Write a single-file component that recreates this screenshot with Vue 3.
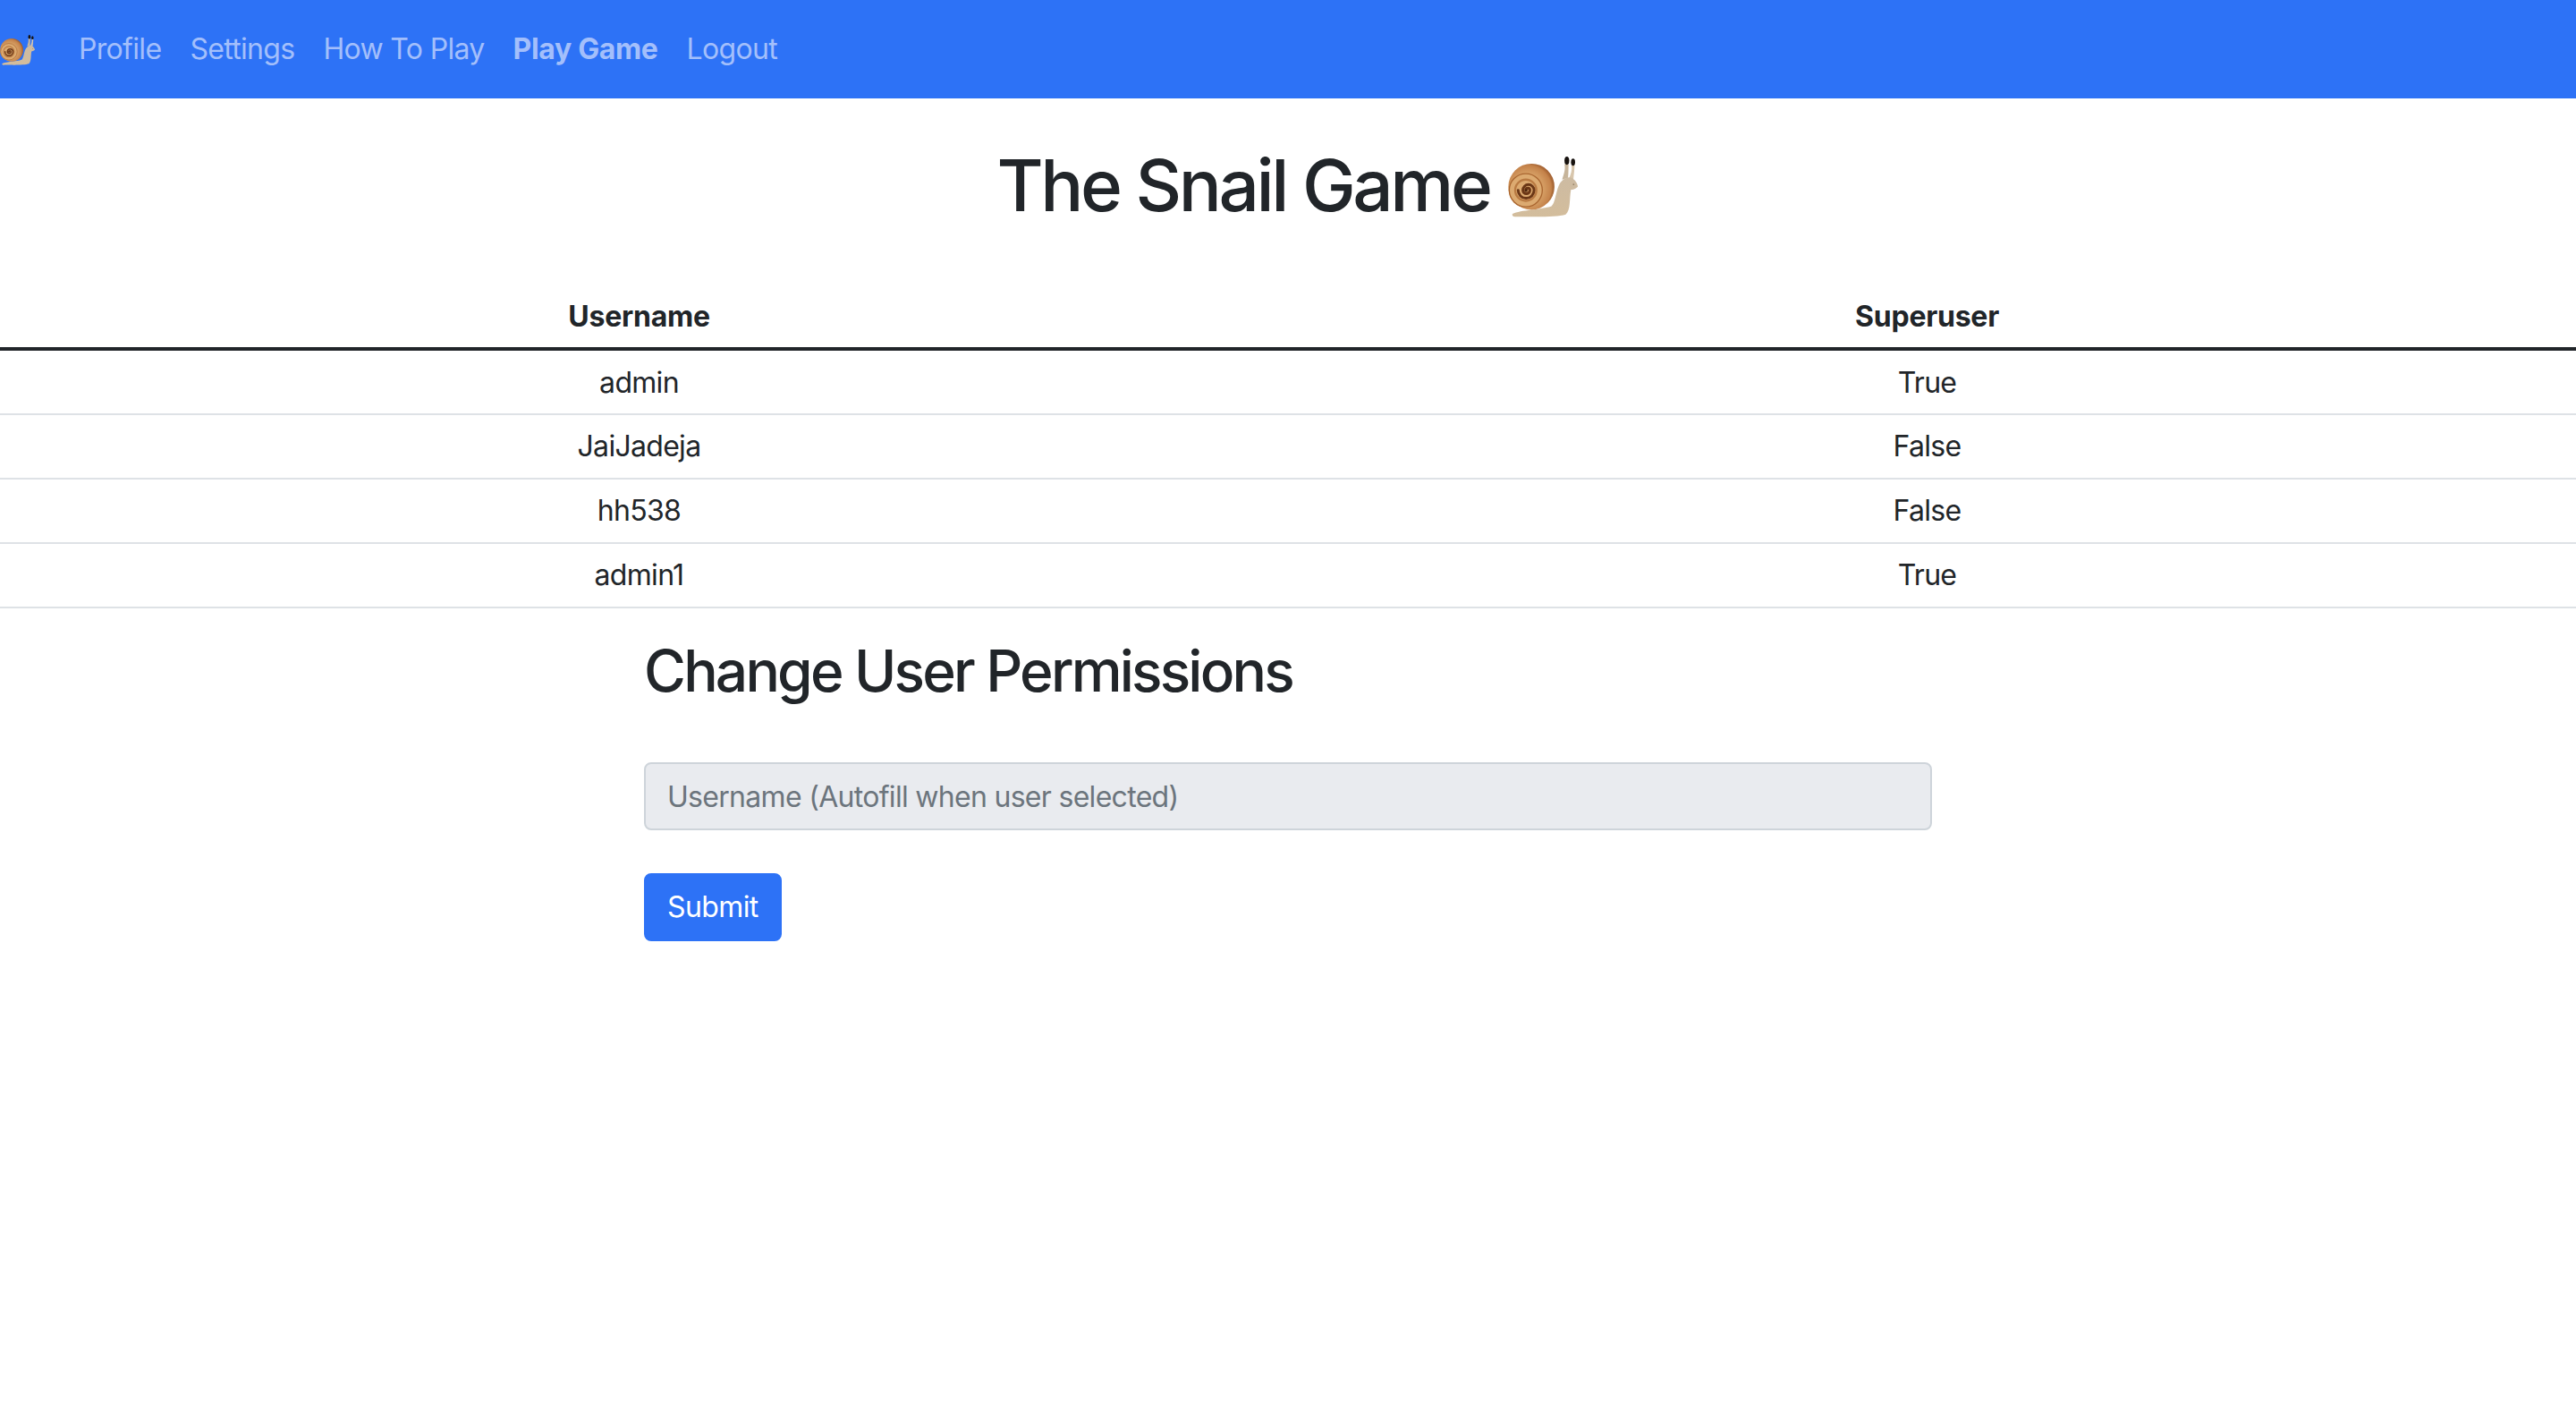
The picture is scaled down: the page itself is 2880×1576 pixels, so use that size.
<template>
  <div class="page">
    <nav class="navbar">
      <a class="brand" href="#">
        <svg class="snail snail-small" viewBox="78 40 240 212">
          <defs>
            <radialGradient id="shell" cx="0.42" cy="0.55" r="0.6">
              <stop offset="0" stop-color="#dca066" />
              <stop offset="0.6" stop-color="#d39a60" />
              <stop offset="0.85" stop-color="#c4824a" />
              <stop offset="1" stop-color="#9a5224" />
            </radialGradient>
            <linearGradient id="body" x1="0" y1="0" x2="0" y2="1">
              <stop offset="0" stop-color="#cdbba2" />
              <stop offset="1" stop-color="#d3bd9c" />
            </linearGradient>
          </defs>
          <g id="snail-art">
            <path d="M268 72 C272 92 266 104 260 124 L280 118 C282 100 281 86 282 72 Z" fill="#c6b49a" />
            <path d="M292 76 C294 92 290 104 284 118 L298 124 C300 104 302 90 302 76 Z" fill="#d8c6ac" />
            <path d="M92 240 C120 226 190 226 224 214 C236 204 238 170 248 146 C256 126 276 112 292 118 C304 124 314 140 313 148 C304 156 296 158 290 158 C284 190 290 226 272 242 C240 254 130 248 100 250 C92 250 90 244 92 240 Z" fill="url(#body)" />
            <path d="M298 136 L302 143 L296 142 Z" fill="#8d7a60" />
            <ellipse cx="276" cy="60" rx="8" ry="14" fill="#17120f" />
            <ellipse cx="297" cy="65" rx="7" ry="12" fill="#17120f" />
            <circle cx="156" cy="148" r="78" fill="url(#shell)" />
            <path d="M156 72 C214 78 244 130 226 178 M172 74 C222 92 240 140 224 184 M190 82 C228 106 238 150 220 192 M207 94 C232 120 236 162 212 200" fill="none" stroke="#a96f3c" stroke-width="3" opacity="0.45" />
            <circle cx="137" cy="160" r="58" fill="#dcaa70" />
            <path d="M81 160 a56 56 0 0 1 112 0 a56 56 0 0 1 -112 0" fill="none" stroke="#a9652f" stroke-width="4" />
            <path d="M101 160 a36 36 0 0 1 72 0 a36 36 0 0 1 -72 0" fill="none" stroke="#b97a42" stroke-width="7" />
            <path d="M137 160 a7 7 0 0 1 14 0 a12 12 0 0 1 -24 0 a19 19 0 0 1 38 0 a27 27 0 0 1 -54 0" fill="none" stroke="#6b3716" stroke-width="9" stroke-linecap="round" />
            <circle cx="138" cy="161" r="5" fill="#4d260e" />
          </g>
        </svg>
      </a>
      <a v-for="link in links" :key="link.label" class="nav-link" :class="{ active: link.active }" href="#">
        {{ link.label }}
      </a>
    </nav>

    <h1 class="title">
      The Snail Game
      <svg class="snail snail-big" viewBox="78 40 240 212"><use href="#snail-art" /></svg>
    </h1>

    <table class="users">
      <thead>
        <tr>
          <th>Username</th>
          <th>Superuser</th>
        </tr>
      </thead>
      <tbody>
        <tr v-for="user in users" :key="user.name">
          <td>{{ user.name }}</td>
          <td>{{ user.superuser }}</td>
        </tr>
      </tbody>
    </table>

    <form class="permissions" @submit.prevent>
      <h2>Change User Permissions</h2>
      <input class="field" type="text" disabled placeholder="Username (Autofill when user selected)" />
      <button class="submit" type="submit">Submit</button>
    </form>
  </div>
</template>

<script setup>
const links = [
  { label: 'Profile' },
  { label: 'Settings' },
  { label: 'How To Play' },
  { label: 'Play Game', active: true },
  { label: 'Logout' },
]

const users = [
  { name: 'admin', superuser: 'True' },
  { name: 'JaiJadeja', superuser: 'False' },
  { name: 'hh538', superuser: 'False' },
  { name: 'admin1', superuser: 'True' },
]
</script>

<style>
body {
  background: #fff;
}
</style>

<style scoped>
.page {
  min-height: 1576px;
  font-family: Inter, "Liberation Sans", sans-serif;
  font-size: 32px;
  line-height: 48px;
  letter-spacing: -0.7px;
  color: #212529;
}

.navbar {
  display: flex;
  align-items: center;
  height: 110px;
  background: #2d72f6;
}

.brand {
  display: flex;
  margin-right: 32px;
}

.snail {
  display: block;
}

.snail-small {
  width: 40px;
  height: 35px;
}

.nav-link {
  padding: 0 16px;
  color: #a3bffb;
  letter-spacing: -0.68px;
  text-decoration: none;
}

.nav-link.active {
  font-weight: 700;
  letter-spacing: -0.35px;
}

.title {
  display: flex;
  justify-content: center;
  align-items: flex-start;
  gap: 20px;
  height: 210px;
  margin: 0;
  padding-top: 49px;
  box-sizing: border-box;
  font-size: 80px;
  font-weight: 500;
  line-height: 96px;
  letter-spacing: -3.4px;
}

.snail-big {
  width: 80px;
  height: 70px;
  margin-top: 14px;
}

.users {
  width: 100%;
  border-collapse: separate;
  border-spacing: 0;
  table-layout: fixed;
  text-align: center;
}

.users th {
  height: 72px;
  padding: 0;
  box-sizing: border-box;
  font-weight: 700;
  letter-spacing: -0.25px;
  border-bottom: 4px solid #212529;
}

.users th:first-child {
  width: 1429px;
}

.users td {
  height: 72px;
  padding: 0;
  box-sizing: border-box;
  border-bottom: 2px solid #dee2e6;
}

.users tr:first-child td {
  padding-top: 2px;
}

.permissions {
  display: flex;
  flex-direction: column;
  align-items: flex-start;
  width: 1440px;
  margin: 0 auto;
}

.permissions h2 {
  margin: 31px 0 0;
  font-size: 64px;
  font-weight: 500;
  line-height: 77px;
  letter-spacing: -2.8px;
}

.field {
  width: 100%;
  height: 76px;
  margin-top: 64px;
  padding: 0 24px;
  box-sizing: border-box;
  border: 2px solid #ced4da;
  border-radius: 8px;
  background: #e9ebef;
  font: inherit;
  letter-spacing: inherit;
}

.field::placeholder {
  color: #6c757d;
  opacity: 1;
}

.submit {
  height: 76px;
  margin-top: 48px;
  padding: 0 24px;
  border: 2px solid #2d72f6;
  border-radius: 8px;
  background: #2d72f6;
  color: #fff;
  font: inherit;
  letter-spacing: -0.6px;
}
</style>
